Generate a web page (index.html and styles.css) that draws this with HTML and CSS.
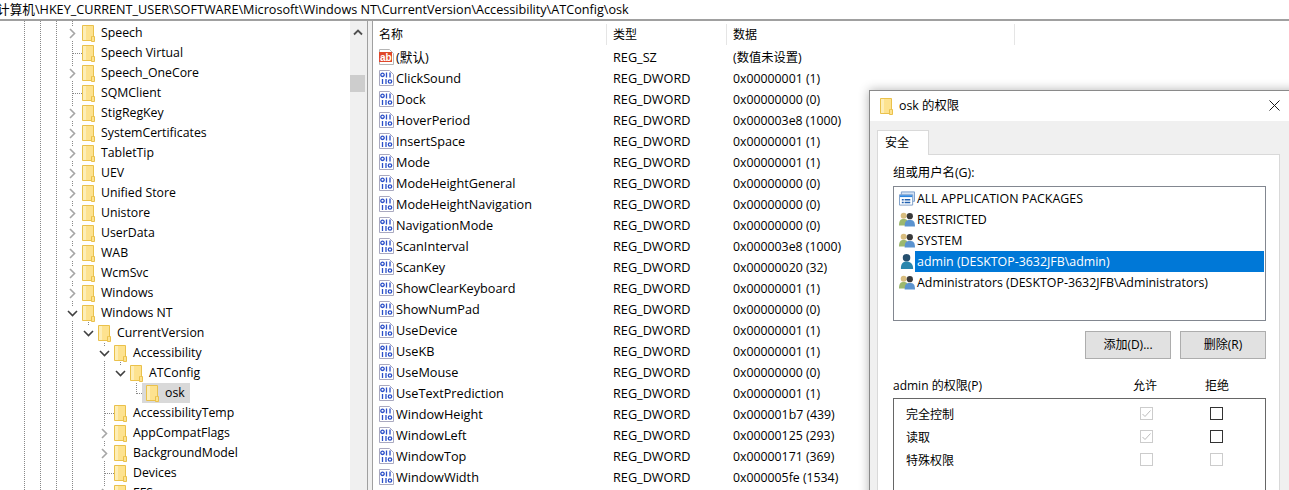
FILE: index.html
```html
<!DOCTYPE html>
<html lang="zh-CN">
<head>
<meta charset="utf-8">
<title>注册表编辑器</title>
<link rel="stylesheet" href="styles.css">
</head>
<body>
<svg class="defs" width="0" height="0" aria-hidden="true">
  <symbol id="folder" viewBox="0 0 13 17">
    <path d="M.5.5h11v15H.5z" fill="#fde28f" stroke="#eac14b"/>
    <path d="M1 1h3v14H1z" fill="#fdeeb8"/>
    <path d="M10.5 11.5h2v5h-3v-5z" fill="#fde28f" stroke="#eac14b"/>
  </symbol>
  <symbol id="right" viewBox="0 0 11 13"><path d="M3 2l4.500 4.500L3 11" fill="none" stroke="#a6a6a6" stroke-width="1.600"/></symbol>
  <symbol id="down" viewBox="0 0 11 13"><path d="M1 4l4.500 4.500L10 4" fill="none" stroke="#404040" stroke-width="1.600"/></symbol>
  <symbol id="bin" viewBox="0 0 15 16">
    <path d="M.5.500h10l4 4v11H.5z" fill="#fff" stroke="#a9a9c0"/>
    <g fill="none" stroke="#2a4fc8" stroke-width="1.300">
      <circle cx="3.500" cy="4.800" r="1.700"/>
      <path d="M7.500 2.500v5M11 2.500v5M3.500 9v5M7 9v5"/>
      <circle cx="11" cy="11.500" r="1.700"/>
    </g>
  </symbol>
  <symbol id="group" viewBox="0 0 17 17">
    <circle cx="5" cy="4.500" r="3.200" fill="#d8bd7f"/>
    <path d="M0 15c0-6 2-7 5-7s5 1 5 7z" fill="#9cb86e"/>
    <circle cx="11.500" cy="5" r="3.300" fill="#3a3a3a"/>
    <path d="M6 16c0-6 2-7 5.500-7S17 10 17 16z" fill="#5b93cf"/>
  </symbol>
  <symbol id="user" viewBox="0 0 17 18">
    <circle cx="8" cy="5" r="4" fill="#27506f"/>
    <path d="M2 17c0-6 2-8 6-8s7 2 7 8z" fill="#2a86ad"/>
  </symbol>
  <symbol id="packages" viewBox="0 0 17 15">
    <path d="M2.500.500h14v10h-14z" fill="#d5e4f5" stroke="#7a9cc7"/>
    <path d="M.5 3.500h14v11H.5z" fill="#fff" stroke="#7a9cc7"/>
    <path d="M1 4h13v2H1z" fill="#2f86df"/>
    <path d="M3 8h2v1.500H3zM6 8h6v1.500H6zM3 11h2v1.500H3zM6 11h6v1.500H6z" fill="#1f5fb0"/>
  </symbol>
  <symbol id="check" viewBox="0 0 13 13"><path d="M2.500 7l2.500 2.500 5.500-6" fill="none" stroke="#bcbcbc"/></symbol>
</svg>

<div class="address"><span class="address-text">计算机\HKEY_CURRENT_USER\SOFTWARE\Microsoft\Windows NT\CurrentVersion\Accessibility\ATConfig\osk</span></div>

<main class="workspace">
  <nav class="tree">
    <div class="row l0"><svg class="tw"><use href="#right"/></svg><svg class="fd"><use href="#folder"/></svg><span>Speech</span></div>
    <div class="row l0 leaf"><i class="tw"></i><svg class="fd"><use href="#folder"/></svg><span>Speech Virtual</span></div>
    <div class="row l0"><svg class="tw"><use href="#right"/></svg><svg class="fd"><use href="#folder"/></svg><span>Speech_OneCore</span></div>
    <div class="row l0 leaf"><i class="tw"></i><svg class="fd"><use href="#folder"/></svg><span>SQMClient</span></div>
    <div class="row l0"><svg class="tw"><use href="#right"/></svg><svg class="fd"><use href="#folder"/></svg><span>StigRegKey</span></div>
    <div class="row l0"><svg class="tw"><use href="#right"/></svg><svg class="fd"><use href="#folder"/></svg><span>SystemCertificates</span></div>
    <div class="row l0"><svg class="tw"><use href="#right"/></svg><svg class="fd"><use href="#folder"/></svg><span>TabletTip</span></div>
    <div class="row l0"><svg class="tw"><use href="#right"/></svg><svg class="fd"><use href="#folder"/></svg><span>UEV</span></div>
    <div class="row l0"><svg class="tw"><use href="#right"/></svg><svg class="fd"><use href="#folder"/></svg><span>Unified Store</span></div>
    <div class="row l0"><svg class="tw"><use href="#right"/></svg><svg class="fd"><use href="#folder"/></svg><span>Unistore</span></div>
    <div class="row l0"><svg class="tw"><use href="#right"/></svg><svg class="fd"><use href="#folder"/></svg><span>UserData</span></div>
    <div class="row l0"><svg class="tw"><use href="#right"/></svg><svg class="fd"><use href="#folder"/></svg><span>WAB</span></div>
    <div class="row l0"><svg class="tw"><use href="#right"/></svg><svg class="fd"><use href="#folder"/></svg><span>WcmSvc</span></div>
    <div class="row l0"><svg class="tw"><use href="#right"/></svg><svg class="fd"><use href="#folder"/></svg><span>Windows</span></div>
    <div class="row l0"><svg class="tw"><use href="#down"/></svg><svg class="fd"><use href="#folder"/></svg><span>Windows NT</span></div>
    <div class="row l1"><svg class="tw"><use href="#down"/></svg><svg class="fd"><use href="#folder"/></svg><span>CurrentVersion</span></div>
    <div class="row l2"><svg class="tw"><use href="#down"/></svg><svg class="fd"><use href="#folder"/></svg><span>Accessibility</span></div>
    <div class="row l3"><svg class="tw"><use href="#down"/></svg><svg class="fd"><use href="#folder"/></svg><span>ATConfig</span></div>
    <div class="row l4 leaf"><i class="tw"></i><div class="sel"><svg class="fd"><use href="#folder"/></svg><span>osk</span></div></div>
    <div class="row l2 leaf"><i class="tw"></i><svg class="fd"><use href="#folder"/></svg><span>AccessibilityTemp</span></div>
    <div class="row l2"><svg class="tw"><use href="#right"/></svg><svg class="fd"><use href="#folder"/></svg><span>AppCompatFlags</span></div>
    <div class="row l2"><svg class="tw"><use href="#right"/></svg><svg class="fd"><use href="#folder"/></svg><span>BackgroundModel</span></div>
    <div class="row l2 leaf"><i class="tw"></i><svg class="fd"><use href="#folder"/></svg><span>Devices</span></div>
    <div class="row l2"><svg class="tw"><use href="#right"/></svg><svg class="fd"><use href="#folder"/></svg><span>EFS</span></div>
  </nav>
  <div class="scrollbar">
    <svg class="arrow" width="10" height="7" viewBox="0 0 10 7"><path d="M1 5.500l4-4 4 4" fill="none" stroke="#505050" stroke-width="1.800"/></svg>
    <div class="thumb"></div>
  </div>
  <div class="splitter"></div>
  <section class="values">
    <div class="head">
      <div class="cell c1">名称</div><div class="cell c2">类型</div><div class="cell c3">数据</div>
    </div>
    <div class="vrow"><div class="name"><svg class="ri" viewBox="0 0 15 16"><path d="M.5.500h10l4 4v11H.5z" fill="#fff" stroke="#b5b5b5"/><rect x="0" y="3" width="13" height="10" fill="#e0482a"/><text x="1" y="11.500" class="ab">ab</text></svg>(默认)</div><div class="type">REG_SZ</div><div class="data">(数值未设置)</div></div>
    <div class="vrow"><div class="name"><svg class="ri"><use href="#bin"/></svg>ClickSound</div><div class="type">REG_DWORD</div><div class="data">0x00000001 (1)</div></div>
    <div class="vrow"><div class="name"><svg class="ri"><use href="#bin"/></svg>Dock</div><div class="type">REG_DWORD</div><div class="data">0x00000000 (0)</div></div>
    <div class="vrow"><div class="name"><svg class="ri"><use href="#bin"/></svg>HoverPeriod</div><div class="type">REG_DWORD</div><div class="data">0x000003e8 (1000)</div></div>
    <div class="vrow"><div class="name"><svg class="ri"><use href="#bin"/></svg>InsertSpace</div><div class="type">REG_DWORD</div><div class="data">0x00000001 (1)</div></div>
    <div class="vrow"><div class="name"><svg class="ri"><use href="#bin"/></svg>Mode</div><div class="type">REG_DWORD</div><div class="data">0x00000001 (1)</div></div>
    <div class="vrow"><div class="name"><svg class="ri"><use href="#bin"/></svg>ModeHeightGeneral</div><div class="type">REG_DWORD</div><div class="data">0x00000000 (0)</div></div>
    <div class="vrow"><div class="name"><svg class="ri"><use href="#bin"/></svg>ModeHeightNavigation</div><div class="type">REG_DWORD</div><div class="data">0x00000000 (0)</div></div>
    <div class="vrow"><div class="name"><svg class="ri"><use href="#bin"/></svg>NavigationMode</div><div class="type">REG_DWORD</div><div class="data">0x00000000 (0)</div></div>
    <div class="vrow"><div class="name"><svg class="ri"><use href="#bin"/></svg>ScanInterval</div><div class="type">REG_DWORD</div><div class="data">0x000003e8 (1000)</div></div>
    <div class="vrow"><div class="name"><svg class="ri"><use href="#bin"/></svg>ScanKey</div><div class="type">REG_DWORD</div><div class="data">0x00000020 (32)</div></div>
    <div class="vrow"><div class="name"><svg class="ri"><use href="#bin"/></svg>ShowClearKeyboard</div><div class="type">REG_DWORD</div><div class="data">0x00000001 (1)</div></div>
    <div class="vrow"><div class="name"><svg class="ri"><use href="#bin"/></svg>ShowNumPad</div><div class="type">REG_DWORD</div><div class="data">0x00000000 (0)</div></div>
    <div class="vrow"><div class="name"><svg class="ri"><use href="#bin"/></svg>UseDevice</div><div class="type">REG_DWORD</div><div class="data">0x00000001 (1)</div></div>
    <div class="vrow"><div class="name"><svg class="ri"><use href="#bin"/></svg>UseKB</div><div class="type">REG_DWORD</div><div class="data">0x00000001 (1)</div></div>
    <div class="vrow"><div class="name"><svg class="ri"><use href="#bin"/></svg>UseMouse</div><div class="type">REG_DWORD</div><div class="data">0x00000000 (0)</div></div>
    <div class="vrow"><div class="name"><svg class="ri"><use href="#bin"/></svg>UseTextPrediction</div><div class="type">REG_DWORD</div><div class="data">0x00000001 (1)</div></div>
    <div class="vrow"><div class="name"><svg class="ri"><use href="#bin"/></svg>WindowHeight</div><div class="type">REG_DWORD</div><div class="data">0x000001b7 (439)</div></div>
    <div class="vrow"><div class="name"><svg class="ri"><use href="#bin"/></svg>WindowLeft</div><div class="type">REG_DWORD</div><div class="data">0x00000125 (293)</div></div>
    <div class="vrow"><div class="name"><svg class="ri"><use href="#bin"/></svg>WindowTop</div><div class="type">REG_DWORD</div><div class="data">0x00000171 (369)</div></div>
    <div class="vrow"><div class="name"><svg class="ri"><use href="#bin"/></svg>WindowWidth</div><div class="type">REG_DWORD</div><div class="data">0x000005fe (1534)</div></div>
  </section>
</main>

<aside class="dialog">
  <header class="titlebar">
    <svg class="fd"><use href="#folder"/></svg>
    <span class="title">osk 的权限</span>
    <svg class="close" width="11" height="11" viewBox="0 0 11 11"><path d="M.5.500l10 10M10.500.500l-10 10" fill="none" stroke="#1a1a1a"/></svg>
  </header>
  <div class="dialog-body">
    <div class="tab">安全</div>
    <div class="panel">
      <div class="label">组或用户名(G):</div>
      <ul class="users">
        <li class="user"><svg class="ui"><use href="#packages"/></svg><span>ALL APPLICATION PACKAGES</span></li>
        <li class="user"><svg class="ui"><use href="#group"/></svg><span>RESTRICTED</span></li>
        <li class="user"><svg class="ui"><use href="#group"/></svg><span>SYSTEM</span></li>
        <li class="user active"><svg class="ui"><use href="#user"/></svg><span>admin (DESKTOP-3632JFB\admin)</span></li>
        <li class="user"><svg class="ui"><use href="#group"/></svg><span>Administrators (DESKTOP-3632JFB\Administrators)</span></li>
      </ul>
      <div class="buttons">
        <button class="btn" type="button">添加(D)...</button>
        <button class="btn" type="button">删除(R)</button>
      </div>
      <div class="perm-head">
        <span>admin 的权限(P)</span><span>允许</span><span>拒绝</span>
      </div>
      <div class="perms">
        <div class="perm"><span>完全控制</span><i class="box dis"><svg width="13" height="13"><use href="#check"/></svg></i><i class="box on"></i></div>
        <div class="perm"><span>读取</span><i class="box dis"><svg width="13" height="13"><use href="#check"/></svg></i><i class="box on"></i></div>
        <div class="perm"><span>特殊权限</span><i class="box dis"></i><i class="box dis"></i></div>
      </div>
    </div>
  </div>
</aside>
</body>
</html>
```

FILE: styles.css
```css
* { box-sizing: border-box; }
html, body { margin: 0; padding: 0; height: 490px; overflow: hidden; background: #fff; }
body {
  position: relative;
  display: flex;
  flex-direction: column;
  width: 1289px;
  font: 12.4px/20px "Open Sans", "Noto Sans CJK SC", sans-serif;
  color: #000;
}
.defs { position: absolute; }

.address { height: 21px; flex: none; border-bottom: 2px solid #a0a0a0; overflow: hidden; white-space: nowrap; line-height: 19px; font-size: 12.65px; }
.address-text { display: block; margin-left: -3px; }

.workspace { flex: 1; display: flex; min-height: 0; overflow: hidden; }

.tree {
  width: 350px;
  flex: none;
  padding-top: 2px;
  font-size: 12.3px;
  background-image:
    linear-gradient(#888 50%, transparent 50%), linear-gradient(#888 50%, transparent 50%),
    linear-gradient(#888 50%, transparent 50%), linear-gradient(#888 50%, transparent 50%);
  background-size: 1px 2px;
  background-repeat: repeat-y;
  background-position: 24px 0, 40px 0, 56px 0, 72px 0;
}
.row { height: 20px; display: flex; align-items: center; white-space: nowrap; position: relative; }
.row::before { content: ""; position: absolute; width: 1px; background-image: linear-gradient(#888 50%, transparent 50%); background-size: 1px 2px; }
.l1::before { left: 88px; top: -1px; height: 3px; }
.l2::before { left: 104px; top: 0; height: 20px; }
.l3::before { left: 104px; top: 0; height: 20px; }
.l4::before { left: 104px; top: 0; height: 20px; }
.l3::after { content: ""; position: absolute; left: 120px; top: -1px; width: 1px; height: 3px; background-image: linear-gradient(#888 50%, transparent 50%); background-size: 1px 2px; }
.l4::after { content: ""; position: absolute; left: 136px; top: 0; width: 1px; height: 11px; background-image: linear-gradient(#888 50%, transparent 50%); background-size: 1px 2px; }
.tw { width: 11px; height: 13px; flex: none; margin-right: 4px; position: relative; z-index: 1; background: #fff; }
i.tw { height: 1px; width: 9px; margin-right: 6px; background-color: transparent; background-image: linear-gradient(90deg, #888 50%, transparent 50%); background-size: 2px 1px; }
.fd { width: 13px; height: 17px; flex: none; }
.row .fd { margin-right: 6px; }
.l0 { padding-left: 67px; }
.l1 { padding-left: 83px; }
.l2 { padding-left: 99px; }
.l3 { padding-left: 115px; }
.l4 { padding-left: 131px; }
.leaf.l0 { padding-left: 73px; }
.leaf.l0 i.tw { width: 9px; margin-right: 0; }
.leaf.l2 { padding-left: 105px; }
.leaf.l2 i.tw { margin-right: 0; }
.leaf.l4 { padding-left: 137px; }
.leaf.l4 i.tw { width: 5px; margin-right: 0; }
.sel { display: flex; align-items: center; height: 20px; background: #d9d9d9; padding: 0 4px 0 4px; width: 48px; }

.scrollbar { width: 17px; flex: none; background: #f0f0f0; display: flex; flex-direction: column; align-items: flex-start; padding-top: 8px; }
.arrow { flex: none; margin-left: 3px; }
.thumb { width: 15px; height: 17px; margin-top: 39px; background: #cdcdcd; }
.splitter { width: 6px; flex: none; border-left: 1px solid #a0a0a0; border-right: 1px solid #a0a0a0; background: #f0f0f0; }

.values { flex: 1; min-width: 0; padding-top: 3px; }
.head { display: flex; height: 22px; align-items: flex-start; }
.cell { height: 21px; line-height: 22px; padding-left: 6px; border-right: 1px solid #e5e5e5; font-size: 12px; }
.c1 { width: 234px; }
.c2 { width: 120px; }
.c3 { width: 288px; }
.vrow { display: flex; height: 21px; align-items: center; padding-left: 6px; white-space: nowrap; font-size: 12.7px; }
.name { width: 234px; display: flex; align-items: center; }
.ri { width: 15px; height: 16px; margin-right: 2px; flex: none; }
.ab { font: bold 10px "Liberation Sans", sans-serif; fill: #fff; }
.type { width: 120px; }
.data { font-size: 12.3px; margin-top: 2px; }

.dialog {
  position: absolute;
  left: 869px;
  top: 90px;
  width: 430px;
  height: 410px;
  background: #f0f0f0;
  border: 1px solid #8a8a8a;
  box-shadow: 0 0 10px rgba(0, 0, 0, .3);
}
.titlebar { height: 30px; background: #fff; display: flex; align-items: center; padding-left: 10px; }
.titlebar .fd { margin-right: 6px; }
.close { position: absolute; left: 399px; top: 9px; }
.dialog-body { padding: 9px 0 0 7px; }
.tab { width: 52px; height: 25px; background: #fff; border: 1px solid #d9d9d9; border-bottom: 0; padding-left: 7px; line-height: 24px; position: relative; z-index: 1; margin-bottom: -1px; font-size: 12px; }
.panel { width: 403px; height: 350px; background: #fff; border: 1px solid #d9d9d9; padding: 8px 13px 0 15px; }
.label { height: 23px; line-height: 20px; }
.users { list-style: none; margin: 0; padding: 1px 1px 0 5px; height: 135px; border: 1px solid #828790; }
.user { height: 21px; display: flex; align-items: center; white-space: nowrap; }
.ui { width: 16px; height: 17px; flex: none; margin-right: 0; }
.user span { flex: 1; height: 21px; line-height: 21px; padding-left: 2px; }
.active span { background: #0078d7; color: #fff; }
.buttons { display: flex; justify-content: flex-end; gap: 9px; margin-top: 10px; }
.btn { width: 86px; height: 28px; padding: 0; background: #e1e1e1; border: 1px solid #adadad; font: inherit; font-size: 12px; color: #000; }
.perm-head { display: grid; grid-template-columns: 240px 72px 24px; height: 20px; margin-top: 17px; line-height: 20px; white-space: nowrap; font-size: 12px; }
.perms { border: 1px solid #666; height: 110px; margin-top: 2px; padding-top: 3px; }
.perm { display: grid; grid-template-columns: 234px 70px 13px; height: 23px; align-items: center; padding-left: 12px; font-size: 12px; }
.perm span { margin-top: 2px; }
.box { display: block; width: 13px; height: 13px; border: 1px solid #333; }
.box.dis { border-color: #cccccc; }
.box svg { display: block; margin: -1px; }
```
